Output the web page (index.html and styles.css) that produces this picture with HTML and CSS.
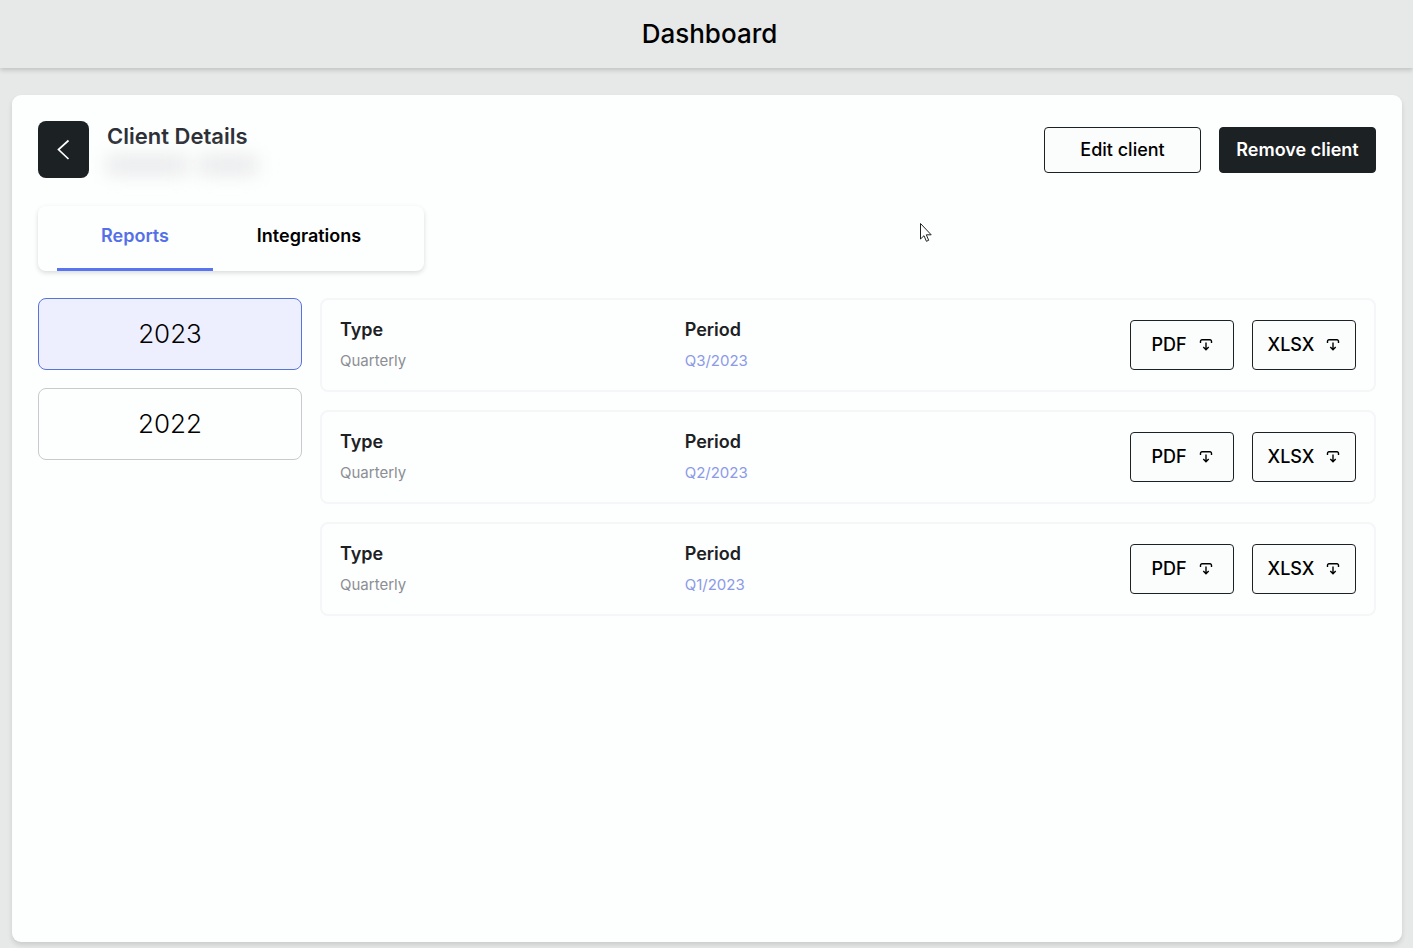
FILE: index.html
```html
<!DOCTYPE html>
<html lang="en">
  <head>
    <meta charset="utf-8">
    <title>Dashboard</title>
    <link rel="stylesheet" href="styles.css">
  </head>
  <body>
    <svg class="sprite" aria-hidden="true">
      <symbol id="download" viewBox="0 0 14 14">
        <path d="M1.5 5V3.200a1.500 1.500 0 0 1 1.500-1.500h8a1.500 1.500 0 0 1 1.500 1.500V5M7 4.500v7M4.300 9L7 11.700 9.700 9" />
      </symbol>
    </svg>

    <header class="topbar">
      <h1 class="topbar-title">Dashboard</h1>
    </header>

    <main class="panel">
      <div class="client-header">
        <button class="back-button" type="button" aria-label="Back">
          <svg viewBox="0 0 14 22"><path d="M11.500 1.500L1.500 10.500l10 9.500" /></svg>
        </button>
        <div class="client-info">
          <h2 class="client-title">Client Details</h2>
          <div class="client-name"><span class="word-long"></span><span class="word-short"></span></div>
        </div>
        <div class="client-actions">
          <button class="button" type="button">Edit client</button>
          <button class="button button-dark" type="button">Remove client</button>
        </div>
      </div>

      <nav class="tabs">
        <a href="#reports" class="tab active">Reports</a>
        <a href="#integrations" class="tab">Integrations</a>
      </nav>

      <div class="content">
        <div class="years">
          <button class="year active" type="button">2023</button>
          <button class="year" type="button">2022</button>
        </div>

        <div class="reports" id="reports">
          <div class="report">
            <div class="field">
              <h3>Type</h3>
              <p>Quarterly</p>
            </div>
            <div class="field">
              <h3>Period</h3>
              <p class="period">Q3/2023</p>
            </div>
            <div class="downloads">
              <button class="download" type="button">PDF <svg><use href="#download" /></svg></button>
              <button class="download" type="button">XLSX <svg><use href="#download" /></svg></button>
            </div>
          </div>

          <div class="report">
            <div class="field">
              <h3>Type</h3>
              <p>Quarterly</p>
            </div>
            <div class="field">
              <h3>Period</h3>
              <p class="period">Q2/2023</p>
            </div>
            <div class="downloads">
              <button class="download" type="button">PDF <svg><use href="#download" /></svg></button>
              <button class="download" type="button">XLSX <svg><use href="#download" /></svg></button>
            </div>
          </div>

          <div class="report">
            <div class="field">
              <h3>Type</h3>
              <p>Quarterly</p>
            </div>
            <div class="field">
              <h3>Period</h3>
              <p class="period">Q1/2023</p>
            </div>
            <div class="downloads">
              <button class="download" type="button">PDF <svg><use href="#download" /></svg></button>
              <button class="download" type="button">XLSX <svg><use href="#download" /></svg></button>
            </div>
          </div>
        </div>
      </div>
    </main>

    <svg class="cursor" viewBox="0 0 12 20" aria-hidden="true">
      <path d="M.5.500v15.500l3.500-3.300 2.400 5.600 2.300-1-2.400-5.500h4.900z" />
    </svg>
  </body>
</html>
```

FILE: styles.css
```css
* {
  box-sizing: border-box;
}

body {
  margin: 0;
  min-height: 100vh;
  display: flex;
  flex-direction: column;
  background-color: #e7e8e8;
  color: #000;
  font-family: Inter, "Liberation Sans", sans-serif;
}

h1,
h2,
h3,
p {
  margin: 0;
}

button {
  font-family: inherit;
  cursor: pointer;
}

.sprite {
  display: none;
}

.topbar {
  height: 68px;
  padding-left: 6px;
  display: flex;
  align-items: center;
  justify-content: center;
  box-shadow: 0 2px 5px rgba(0, 0, 0, 0.18);
}

.topbar-title {
  font-size: 26px;
  font-weight: 500;
  line-height: 32px;
}

.panel {
  flex: 1;
  margin: 27px 11px 6px 12px;
  padding: 26px;
  background-color: #fdfefe;
  border-radius: 9px;
  box-shadow: 0 3px 5px rgba(0, 0, 0, 0.12);
}

.client-header {
  display: flex;
  align-items: center;
  gap: 18px;
}

.back-button {
  width: 51px;
  height: 57px;
  display: flex;
  align-items: center;
  justify-content: center;
  background-color: #1c2124;
  border: none;
  border-radius: 8px;
}

.back-button svg {
  width: 14px;
  height: 22px;
  fill: none;
  stroke: #fff;
  stroke-width: 1.7;
}

.client-info {
  flex: 1;
}

.client-title {
  color: #2c3036;
  font-size: 22px;
  font-weight: 600;
  line-height: 28px;
}

/* obscured client name */
.client-name {
  height: 28px;
  padding-top: 2px;
  display: flex;
  align-items: center;
  gap: 12px;
  filter: blur(9px);
}

.client-name span {
  height: 18px;
  background-color: #e8e9ea;
}

.word-long {
  width: 80px;
}

.word-short {
  width: 58px;
}

.client-actions {
  display: flex;
  gap: 18px;
}

.button {
  width: 157px;
  height: 46px;
  padding: 0;
  background-color: #fbfcfc;
  border: 1px solid #1c2124;
  border-radius: 4px;
  font-size: 18px;
  font-weight: 500;
}

.button-dark {
  background-color: #1c2124;
  color: #fff;
  font-weight: 600;
}

.tabs {
  width: fit-content;
  margin: 28px 0 27px;
  padding: 0 19px;
  display: flex;
  border-radius: 8px;
  box-shadow: 0 2px 5px rgba(0, 0, 0, 0.14);
}

.tab {
  width: 156px;
  height: 65px;
  margin-right: 18px;
  padding-top: 18px;
  border-bottom: 3px solid transparent;
  color: #000;
  font-size: 18px;
  font-weight: 600;
  line-height: 24px;
  text-align: center;
  text-decoration: none;
}

.tab.active {
  color: #5470e8;
  border-bottom-color: #5a74f0;
}

.content {
  display: flex;
  align-items: flex-start;
  gap: 18px;
}

.years {
  width: 264px;
  display: flex;
  flex-direction: column;
  gap: 18px;
}

.year {
  height: 72px;
  padding: 0 0 2px;
  background-color: transparent;
  border: 1px solid #c9cacd;
  border-radius: 8px;
  font-size: 26px;
  font-weight: 300;
}

.year.active {
  background-color: #eeeffe;
  border-color: #5874d8;
}

.reports {
  flex: 1;
  display: flex;
  flex-direction: column;
  gap: 18px;
}

.report {
  padding: 20px 18px;
  display: grid;
  grid-template-columns: repeat(3, 1fr);
  gap: 18px;
  border: 2px solid #f5f6f7;
  border-radius: 8px;
}

.field h3 {
  color: #1c2124;
  font-size: 18px;
  font-weight: 600;
  line-height: 20px;
}

.field p {
  margin-top: 12px;
  color: #8b8e94;
  font-size: 15px;
  line-height: 18px;
}

.field .period {
  color: #8b9ae8;
}

.downloads {
  display: flex;
  justify-content: flex-end;
  gap: 18px;
}

.download {
  width: 104px;
  height: 50px;
  padding: 0 0 1px;
  display: flex;
  align-items: center;
  justify-content: center;
  gap: 12px;
  background-color: #fafdfc;
  border: 1px solid #1c2124;
  border-radius: 4px;
  font-size: 18px;
  font-weight: 500;
}

.download svg {
  width: 14px;
  height: 14px;
  fill: none;
  stroke: #000;
  stroke-width: 1.4;
}

.cursor {
  position: absolute;
  top: 223px;
  left: 920px;
  width: 12px;
  height: 20px;
  fill: #fff;
  stroke: #222;
  pointer-events: none;
}
```
